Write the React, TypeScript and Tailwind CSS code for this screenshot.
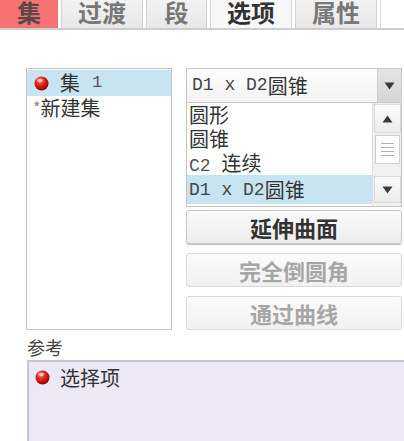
import React from "react";

const CJK = '"Noto Sans CJK SC", "Noto Sans", sans-serif';
const MONO = '"Liberation Mono", "Noto Sans CJK SC", monospace';

function Ball({ className = "" }: { className?: string }) {
  return (
    <svg width="15" height="15" viewBox="0 0 15 15" className={className}>
      <defs>
        <radialGradient id="rb" cx="40%" cy="32%" r="65%">
          <stop offset="0%" stopColor="#ffb0a8" />
          <stop offset="30%" stopColor="#f23a2a" />
          <stop offset="80%" stopColor="#c10e0a" />
          <stop offset="100%" stopColor="#8a0604" />
        </radialGradient>
      </defs>
      <circle cx="7.5" cy="7.5" r="7" fill="url(#rb)" />
      <ellipse cx="6" cy="4.2" rx="3" ry="1.8" fill="#fff" opacity="0.55" />
    </svg>
  );
}

function Tri({ up = false }: { up?: boolean }) {
  return (
    <svg width="11" height="8" viewBox="0 0 11 8">
      {up ? <path d="M5.5 0.5 L10.5 7.5 L0.5 7.5 Z" fill="#3a3a3a" /> : <path d="M0.5 0.5 L10.5 0.5 L5.5 7.5 Z" fill="#3a3a3a" />}
    </svg>
  );
}

function Tab({ label, w, kind }: { label: string; w: string; kind: "red" | "active" | "normal" }) {
  const bg =
    kind === "red"
      ? "bg-[#f77272] text-[#5a4848]"
      : kind === "active"
      ? "bg-[#f8f8f8] text-[#333] border-x border-[#d6d6d6]"
      : "bg-gradient-to-b from-[#f2f2f2] to-[#e8e8e8] text-[#777] border-x border-[#d2d2d2]";
  return (
    <div className={`${w} ${bg} h-full flex items-end justify-center overflow-hidden`}>
      <span className="text-[24px] font-bold leading-[24px] mb-[4px]">{label}</span>
    </div>
  );
}

function D1D2() {
  return (
    <>
      <span style={{ fontFamily: MONO }} className="text-[18px] text-[#444]">D1 x D2</span>
      <span>圆锥</span>
    </>
  );
}

function Btn({ label, disabled }: { label: string; disabled?: boolean }) {
  return (
    <div
      className={`h-[34px] rounded-[3px] border border-[#c9c9c9] bg-gradient-to-b from-[#fbfbfb] to-[#ececec] flex items-center justify-center text-[22px] leading-[26px] font-bold ${
        disabled ? "text-[#a6a6a6] border-[#dadada] from-[#fafafa] to-[#f1f1f1]" : "text-[#333] shadow-[0_1px_1px_rgba(0,0,0,0.25)]"
      }`}
    >
      {label}
    </div>
  );
}

export default function App() {
  return (
    <div className="w-[404px] h-[441px] overflow-hidden bg-white flex flex-col" style={{ fontFamily: CJK }}>
      {/* Tabs */}
      <div className="h-[30px] flex gap-[3px] border-b-2 border-[#cdcdcd] shrink-0">
        <Tab label="集" w="w-[58px]" kind="red" />
        <Tab label="过渡" w="w-[82px]" kind="normal" />
        <Tab label="段" w="w-[61px]" kind="normal" />
        <Tab label="选项" w="w-[82px]" kind="active" />
        <Tab label="属性" w="w-[82px]" kind="normal" />
        <div className="flex-1 border-l border-[#d6d6d6] bg-white" />
      </div>

      <div className="flex pl-[26px] pt-[38px]">
        {/* Left list */}
        <div className="w-[146px] h-[262px] border border-[#c4c4c4] bg-white pt-[1px] flex flex-col">
          <div className="h-[26px] bg-[#c7e4f2] flex items-center pl-[7px] text-[20px] text-[#333] leading-[26px]">
            <Ball />
            <span className="ml-[11px]">集</span>
            <span style={{ fontFamily: MONO }} className="text-[17px] text-[#555] ml-[12px]">1</span>
          </div>
          <div className="h-[24px] flex items-center pl-[6px] text-[20px] text-[#333] leading-[24px]">
            <span className="text-[16px] text-[#888] mt-[-2px]">*</span>
            <span>新建集</span>
          </div>
        </div>

        {/* Right column */}
        <div className="ml-[14px] w-[216px] flex flex-col">
          {/* Dropdown */}
          <div className="h-[35px] border border-[#c8c8c8] flex bg-gradient-to-b from-[#fdfdfd] to-[#f3f3f3]">
            <div className="flex-1 flex items-center pl-[5px] text-[20px] text-[#333]">
              <D1D2 />
            </div>
            <div className="w-[24px] bg-gradient-to-b from-[#e4e4e4] to-[#d6d6d6] border-l border-[#cfcfcf] flex items-center justify-center">
              <Tri />
            </div>
          </div>
          {/* List */}
          <div className="h-[104px] border border-[#c4c4c4] border-t-0 flex bg-white overflow-hidden">
            <div className="flex-1 flex flex-col text-[20px] text-[#333] leading-[24px]">
              <div className="h-[24px] pl-[2px]">圆形</div>
              <div className="h-[24px] pl-[2px]">圆锥</div>
              <div className="h-[24px] pl-[2px]">
                <span style={{ fontFamily: MONO }} className="text-[18px] text-[#555]">C2 </span>
                <span>连续</span>
              </div>
              <div className="h-[29px] pl-[2px] bg-[#c7e4f2] flex items-center">
                <D1D2 />
              </div>
            </div>
            <div className="w-[29px] bg-[#f0f0f0] border-l border-[#e0e0e0] flex flex-col items-center pt-[1px] gap-[2px]">
              <div className="w-[27px] h-[29px] bg-gradient-to-b from-[#fafafa] to-[#ececec] border border-[#d8d8d8] flex items-center justify-center">
                <Tri up />
              </div>
              <div className="w-[25px] h-[29px] bg-white border border-[#cfcfcf] flex flex-col items-center justify-center gap-[3px]">
                <div className="w-[13px] h-[1px] bg-[#b0b0b0]" />
                <div className="w-[13px] h-[1px] bg-[#b0b0b0]" />
                <div className="w-[13px] h-[1px] bg-[#b0b0b0]" />
                <div className="w-[13px] h-[1px] bg-[#b0b0b0]" />
              </div>
              <div className="flex-1" />
              <div className="w-[27px] h-[27px] bg-gradient-to-b from-[#fafafa] to-[#ececec] border border-[#d8d8d8] flex items-center justify-center mb-[3px]">
                <Tri />
              </div>
            </div>
          </div>
          <div className="mt-[3px] flex flex-col gap-[9px]">
            <Btn label="延伸曲面" />
            <Btn label="完全倒圆角" disabled />
            <Btn label="通过曲线" disabled />
          </div>
        </div>
      </div>

      {/* Reference */}
      <div className="pl-[27px] mt-[6px]">
        <div className="text-[18px] leading-[22px] text-[#444]">参考</div>
        <div className="mt-[2px] h-[90px] bg-[#ede8f6] border-t-2 border-l-2 border-[#c8c6cc] flex items-start pt-[4px] pl-[6px]">
          <Ball className="mt-[4px]" />
          <span className="ml-[10px] text-[20px] leading-[24px] text-[#333]">选择项</span>
        </div>
      </div>
    </div>
  );
}
